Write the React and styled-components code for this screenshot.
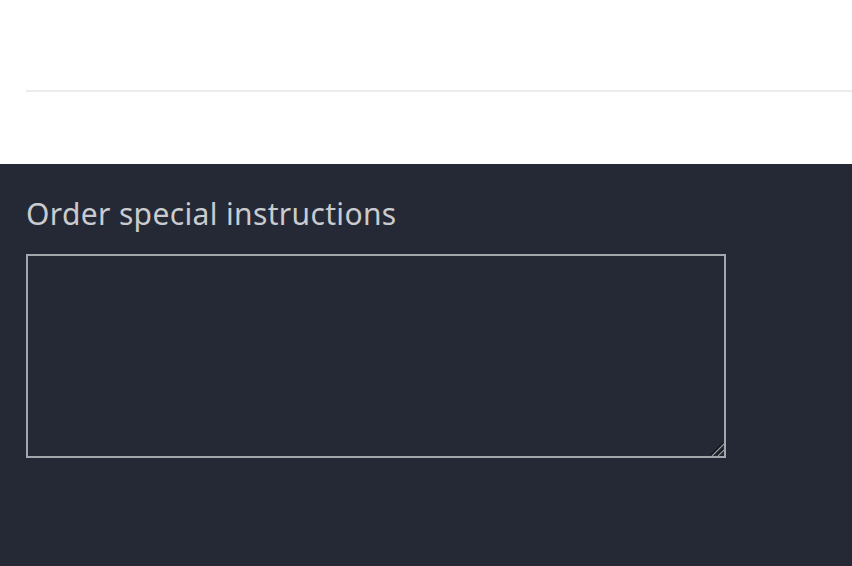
import React from "react";
import styled, { createGlobalStyle } from "styled-components";

const GlobalStyle = createGlobalStyle`
  html, body {
    margin: 0;
    padding: 0;
    background: #ffffff;
  }
  body {
    font-family: "Noto Sans", "Open Sans", sans-serif;
    overflow: hidden;
  }
`;

const Page = styled.div`
  width: 852px;
  height: 566px;
  display: flex;
  flex-direction: column;
`;

const TopArea = styled.div`
  height: 164px;
  padding: 90px 0 0 26px;
  box-sizing: border-box;
  flex-shrink: 0;
`;

const Rule = styled.hr`
  margin: 0;
  border: none;
  height: 2px;
  background: #ececec;
`;

const Footer = styled.section`
  flex: 1;
  background: #252935;
  padding: 30px 26px 0;
`;

const Label = styled.label`
  display: block;
  color: #c9cbcf;
  font-size: 30px;
  line-height: 40px;
  letter-spacing: 0.35px;
  margin-bottom: 20px;
`;

const NoteWrap = styled.div`
  position: relative;
  width: 700px;
  height: 204px;
`;

const Notes = styled.textarea`
  display: block;
  box-sizing: border-box;
  width: 100%;
  height: 100%;
  background: transparent;
  border: 2px solid #a3a6ab;
  border-radius: 0;
  color: #d8dadd;
  font-family: inherit;
  font-size: 16px;
  padding: 8px;
  outline: none;
  resize: none;
`;

const Grip = styled.svg`
  position: absolute;
  right: 2px;
  bottom: 2px;
  width: 15px;
  height: 15px;
  pointer-events: none;
`;

export default function App() {
  return (
    <Page>
      <GlobalStyle />
      <TopArea>
        <Rule />
      </TopArea>
      <Footer>
        <Label htmlFor="order-note">Order special instructions</Label>
        <NoteWrap>
          <Notes id="order-note" />
          <Grip viewBox="0 0 15 15">
            <path d="M2 14 L14 2" stroke="#111318" strokeWidth="1.3" />
            <path d="M3 15 L15 3" stroke="#9a9da3" strokeWidth="1.1" />
            <path d="M8 14 L14 8" stroke="#111318" strokeWidth="1.3" />
            <path d="M9 15 L15 9" stroke="#9a9da3" strokeWidth="1.1" />
          </Grip>
        </NoteWrap>
      </Footer>
    </Page>
  );
}
